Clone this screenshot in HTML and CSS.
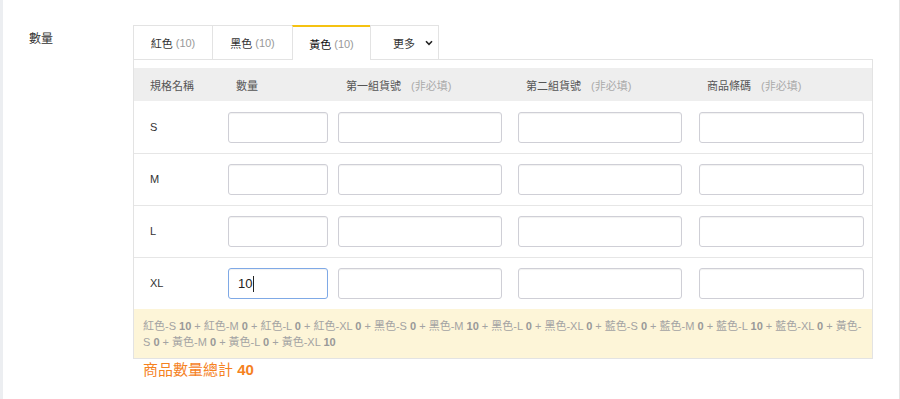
FILE: index.html
```html
<!DOCTYPE html>
<html lang="zh-Hant">
<head>
<meta charset="utf-8">
<title>數量</title>
<link rel="stylesheet" href="styles.css">
</head>
<body>
<div class="page">
  <div class="field-label">數量</div>
  <div class="field-body">
    <div class="tabs">
      <div class="tab tab-a">紅色 <span class="cnt">(10)</span></div>
      <div class="tab tab-b">黑色 <span class="cnt">(10)</span></div>
      <div class="tab tab-c active">黃色 <span class="cnt">(10)</span></div>
      <div class="tab tab-more">更多
        <svg class="chev" width="8" height="6" viewBox="0 0 8 6"><path d="M1 1.3 L4 4.3 L7 1.3" fill="none" stroke="#222" stroke-width="1.6"/></svg>
      </div>
    </div>
    <div class="panel">
      <div class="grid head">
        <div class="cell first">規格名稱</div>
        <div class="cell">數量</div>
        <div class="cell">第一組貨號<span class="opt">(非必填)</span></div>
        <div class="cell">第二組貨號<span class="opt">(非必填)</span></div>
        <div class="cell">商品條碼<span class="opt">(非必填)</span></div>
      </div>
      <div class="grid row">
        <div class="cell first">S</div>
        <div class="cell"><div class="input w-qty"></div></div>
        <div class="cell"><div class="input w-a"></div></div>
        <div class="cell"><div class="input w-a"></div></div>
        <div class="cell"><div class="input w-b"></div></div>
      </div>
      <div class="grid row">
        <div class="cell first">M</div>
        <div class="cell"><div class="input w-qty"></div></div>
        <div class="cell"><div class="input w-a"></div></div>
        <div class="cell"><div class="input w-a"></div></div>
        <div class="cell"><div class="input w-b"></div></div>
      </div>
      <div class="grid row">
        <div class="cell first">L</div>
        <div class="cell"><div class="input w-qty"></div></div>
        <div class="cell"><div class="input w-a"></div></div>
        <div class="cell"><div class="input w-a"></div></div>
        <div class="cell"><div class="input w-b"></div></div>
      </div>
      <div class="grid row">
        <div class="cell first">XL</div>
        <div class="cell"><div class="input w-qty focus">10<span class="caret"></span></div></div>
        <div class="cell"><div class="input w-a"></div></div>
        <div class="cell"><div class="input w-a"></div></div>
        <div class="cell"><div class="input w-b"></div></div>
      </div>
      <div class="summary">紅色-S <b>10</b> + 紅色-M <b>0</b> + 紅色-L <b>0</b> + 紅色-XL <b>0</b> + 黑色-S <b>0</b> + 黑色-M <b>10</b> + 黑色-L <b>0</b> + 黑色-XL <b>0</b> + 藍色-S <b>0</b> + 藍色-M <b>0</b> + 藍色-L <b>10</b> + 藍色-XL <b>0</b> + 黃色-<br>S <b>0</b> + 黃色-M <b>0</b> + 黃色-L <b>0</b> + 黃色-XL <b>10</b></div>
    </div>
    <div class="total">商品數量總計 <b>40</b></div>
  </div>
</div>
</body>
</html>
```

FILE: styles.css
```css
* { box-sizing: border-box; }
html, body { margin: 0; padding: 0; background: #fff; }
body {
  font-family: "Liberation Sans", "Noto Sans CJK TC", sans-serif;
  color: #333;
}
.page {
  width: 900px;
  height: 399px;
  display: flex;
  border-left: 3px solid #eceef1;
  border-right: 1px solid #e4e4e4;
  padding-top: 25px;
}
.field-label {
  width: 130px;
  padding-left: 26px;
  padding-top: 2px;
  font-size: 12px;
  line-height: 24px;
  color: #333;
}
.field-body {
  width: 740px;
  display: flex;
  flex-direction: column;
}
.tabs {
  display: flex;
  margin-bottom: -1px;
}
.tab {
  height: 35px;
  border-top: 1px solid #e3e3e3;
  border-left: 1px solid #e3e3e3;
  display: flex;
  align-items: center;
  justify-content: center;
  font-size: 11px;
  color: #333;
  padding-bottom: 1px;
}
.tab .cnt { color: #999; margin-left: 3px; }
.tab-a { width: 79px; }
.tab-b { width: 80px; }
.tab-c { width: 78px; }
.tab-more {
  width: 69px;
  border-right: 1px solid #e3e3e3;
  justify-content: flex-start;
  padding-left: 22px;
}
.tab-more .chev { margin-left: 10px; }
.tab.active {
  background: #fff;
  border-top: 2px solid #f5c211;
  position: relative;
  z-index: 1;
  color: #111;
  padding-bottom: 0;
}
.panel {
  border: 1px solid #e3e3e3;
  padding-top: 8px;
}
.grid {
  display: grid;
  grid-template-columns: 94px 110px 180px 181px 173px;
  width: 738px;
}
.head {
  background: #eeeeee;
  height: 33px;
  align-items: center;
  font-size: 11px;
  color: #555;
}
.head .cell { padding-left: 8px; }
.head .cell.first { padding-left: 16px; }
.opt { color: #aaa; margin-left: 10px; }
.row {
  height: 52px;
  align-items: center;
  font-size: 11px;
  color: #333;
}
.row + .row { border-top: 1px solid #e6e6e6; }
.row .cell.first { padding-left: 16px; padding-bottom: 1px; }
.input {
  height: 31px;
  border: 1px solid #cfcfd6;
  border-radius: 3px;
  background: #fff;
  box-shadow: inset 0 1px 1px rgba(0,0,0,0.06);
  font-size: 13px;
  line-height: 29px;
  padding-left: 9px;
  color: #222;
  display: flex;
  align-items: center;
}
.w-qty { width: 100px; }
.w-a { width: 164px; }
.w-b { width: 165px; }
.input.focus { border-color: #7fa9e6; }
.caret {
  display: inline-block;
  width: 1px;
  height: 16px;
  background: #222;
  margin-left: 1px;
}
.summary {
  background: #fdf5d8;
  padding: 9px 4px 8px 9px;
  font-size: 11px;
  line-height: 16px;
  color: #a3a3a3;
  white-space: nowrap;
}
.summary b { color: #999; }
.total {
  padding-left: 10px;
  padding-top: 1px;
  font-size: 15px;
  line-height: 20px;
  color: #f5821f;
}
.total b { font-weight: bold; }
```
